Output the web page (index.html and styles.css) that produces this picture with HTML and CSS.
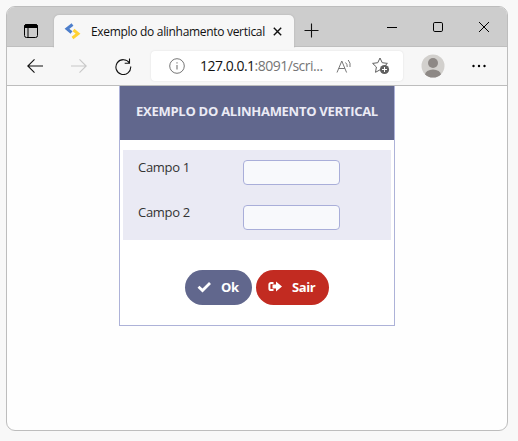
FILE: index.html
```html
<!DOCTYPE html>
<html lang="pt-BR">
<head>
<meta charset="utf-8">
<title>Exemplo do alinhamento vertical</title>
<link rel="stylesheet" href="styles.css">
</head>
<body>
<div class="window">
  <header class="tabbar">
    <svg class="tab-actions" width="16" height="16" viewBox="0 0 16 16"><rect x="1.5" y="1.5" width="13" height="13" rx="2" fill="none" stroke="#000"/><path d="M1.5 3.5a2 2 0 0 1 2-2h9a2 2 0 0 1 2 2V4.500h-13zM5 5v9" stroke="#000"/></svg>
    <div class="tab">
      <svg width="17" height="17" viewBox="0 0 17 17" fill="none" stroke-width="3"><path d="M8.500 1.500L3 5.800L7.500 9.500" stroke="#4d7ecb"/><path d="M9.500 7L14 10.700L8.500 15" stroke="#ffd234"/></svg>
      <span class="tab-title">Exemplo do alinhamento vertical</span>
      <svg class="tab-close" width="9" height="9" viewBox="0 0 9 9"><path d="M.8.8l7.4 7.4M8.2.8L.8 8.2" stroke="#111" stroke-width="1.4"/></svg>
    </div>
    <svg class="new-tab" width="15" height="15" viewBox="0 0 15 15"><path d="M7.5 .5v14M.5 7.5h14" stroke="#111" stroke-width="1.1"/></svg>
    <div class="controls">
      <svg width="10" height="10" viewBox="0 0 10 10"><path d="M0 5.5h10" stroke="#000"/></svg>
      <svg width="10" height="10" viewBox="0 0 10 10"><rect x=".5" y=".5" width="9" height="9" rx="1.3" fill="none" stroke="#000"/></svg>
      <svg width="10" height="10" viewBox="0 0 10 10"><path d="M0 0l10 10M10 0L0 10" stroke="#000"/></svg>
    </div>
  </header>
  <nav class="toolbar">
    <svg class="back" width="16" height="14" viewBox="0 0 16 14" fill="none" stroke="#111" stroke-width="1.1"><path d="M16 7H.8M7.5 .4L.8 7l6.700 6.600"/></svg>
    <svg class="forward" width="16" height="14" viewBox="0 0 16 14" fill="none" stroke="#c8c8c8" stroke-width="1.1"><path d="M0 7h15.200M8.500 .4L15.200 7l-6.700 6.600"/></svg>
    <svg class="reload" width="17" height="17" viewBox="0 0 17 17" fill="none" stroke="#111" stroke-width="1.1"><path d="M14.500 5A7.400 7.400 0 1 0 15.700 8.500M14.500 .5v4.800H9.700"/></svg>
    <div class="address">
      <svg width="16" height="16" viewBox="0 0 16 16"><circle cx="8" cy="8" r="7.300" fill="none" stroke="#767676"/><path d="M8 7v4.500M8 4.300v1.300" stroke="#767676" stroke-width="1.100"/></svg>
      <span class="url"><span class="host">127.0.0.1</span>:8091/scri...</span>
      <svg class="read" width="17" height="15" viewBox="0 0 17 15" fill="none" stroke="#767676"><path d="M1 13.500L5.800 2l4.800 11.500M2.700 9.500h6.200M9.500 3.500q2 1.800 1.700 4.500M12.200 1q2.700 3 1.800 7"/></svg>
      <svg class="star" width="18" height="18" viewBox="0 0 18 18"><path d="M8 1l2.200 4.700 5.200.7-3.700 3.600.5 2.500M8 1L5.800 5.700.6 6.400l3.800 3.600-.9 5.300L8 12.800" fill="none" stroke="#606060" stroke-linejoin="round"/><circle cx="12.500" cy="12.500" r="4.600" fill="#606060"/><path d="M12.500 10v5M10 12.500h5" stroke="#fff"/></svg>
    </div>
    <svg class="avatar" width="24" height="24" viewBox="0 0 24 24"><defs><clipPath id="face"><circle cx="12" cy="12" r="11.500"/></clipPath></defs><g clip-path="url(#face)"><path fill="#d2d0cd" d="M0 0h24v24H0z"/><circle cx="12" cy="9" r="5" fill="#8d8885"/><ellipse cx="12" cy="21" rx="8" ry="5.500" fill="#8d8885"/></g></svg>
    <svg class="more" width="14" height="4" viewBox="0 0 14 4"><circle cx="1.500" cy="2" r="1.200"/><circle cx="7" cy="2" r="1.200"/><circle cx="12.500" cy="2" r="1.200"/></svg>
  </nav>
  <main class="page">
    <form class="card">
      <h1><span>EXEMPLO DO ALINHAMENTO VERTICAL</span></h1>
      <div class="fields">
        <div class="row"><label for="campo1">Campo 1</label><input id="campo1" type="text"></div>
        <div class="row"><label for="campo2">Campo 2</label><input id="campo2" type="text"></div>
      </div>
      <div class="buttons">
        <button type="button" class="ok"><svg width="14" height="14" viewBox="0 0 14 14"><path d="M1.500 6.700l4 3.800L13 3" fill="none" stroke="#fff" stroke-width="2.800"/></svg><span>Ok</span></button>
        <button type="button" class="exit"><svg width="14" height="14" viewBox="0 0 14 14"><path d="M5.500 2.900H3A1.600 1.600 0 0 0 1.400 4.500v4A1.600 1.600 0 0 0 3 10.100h2.500" fill="none" stroke="#fff" stroke-width="2"/><path d="M4.500 4.500h3.500V1.500L14 6.500l-6 5V8.500H4.500z" fill="#fff"/></svg><span>Sair</span></button>
      </div>
    </form>
  </main>
</div>
</body>
</html>
```
FILE: styles.css
```css
* { box-sizing: border-box; }
body {
  margin: 0;
  padding: 6px;
  height: 441px;
  overflow: hidden;
  background: #f8f8f8;
  font-family: "Open Sans", "Noto Sans", sans-serif;
}
svg { display: block; flex: none; }
.window {
  width: 502px;
  height: 425px;
  border: 1px solid #bdbdbd;
  border-radius: 9px;
  overflow: hidden;
  background: #fefefe;
}
.tabbar {
  display: flex;
  height: 40px;
  background: #cdcdcd;
  border-bottom: 1px solid #bfbfbf;
}
.tab-actions { margin: 16px 0 0 16px; }
.tab {
  display: flex;
  align-items: center;
  width: 240px;
  height: 33px;
  margin: 8px 0 0 15px;
  padding-left: 10px;
  border-radius: 5px 5px 0 0;
  background: #f7f7f7;
  box-shadow: 0 0 2px #aaa;
  clip-path: inset(-3px -3px 0 -3px);
}
.tab-title {
  width: 174px;
  margin-left: 10px;
  font-size: 12px;
  line-height: 16px;
  letter-spacing: -0.31px;
  white-space: nowrap;
  color: #111;
}
.tab-close { margin-left: 8px; }
.new-tab { margin: 16px 0 0 10px; }
.controls {
  display: flex;
  gap: 36px;
  margin: 15px 0 0 68px;
}
.toolbar {
  display: flex;
  align-items: center;
  height: 39px;
  background: #f7f7f7;
  border-bottom: 1px solid #bdbdbd;
}
.back { margin-left: 20px; }
.forward { margin-left: 28px; }
.reload { margin-left: 28px; }
.address {
  display: flex;
  align-items: center;
  width: 252px;
  height: 30px;
  margin-left: 19px;
  padding-left: 18px;
  border-radius: 4px;
  background: #fff;
  box-shadow: 0 0 2px #ddd;
}
.url {
  width: 126px;
  margin-left: 15px;
  font-size: 14px;
  line-height: 20px;
  letter-spacing: -0.5px;
  white-space: nowrap;
  color: #767676;
}
.host { color: #111; }
.read { margin-left: 10px; }
.star { margin-left: 19px; }
.avatar { margin-left: 18px; }
.more { margin-left: 27px; }
.page { display: flex; padding-left: 112px; }
.card {
  width: 276px;
  height: 240px;
  border: 1px solid #adb2d8;
  border-top: 0;
  background: #fff;
}
h1 {
  height: 54px;
  margin: 0;
  background: #61678d;
  color: #ebebf5;
  font-size: 13px;
  line-height: 50px;
  letter-spacing: -0.27px;
  text-align: center;
  white-space: nowrap;
}
.fields {
  height: 90px;
  margin: 10px 3px 0;
  background: #eaeaf4;
}
.row {
  display: flex;
  height: 45px;
  padding: 10px 0 0 15px;
}
label {
  width: 105px;
  color: #333;
  font-size: 13px;
  line-height: 15px;
  letter-spacing: -0.3px;
}
input {
  width: 97px;
  height: 25px;
  border: 1px solid #a9aed9;
  border-radius: 4px;
  background: #f8f9fc;
}
.buttons {
  display: flex;
  gap: 4px;
  margin: 30px 0 0 65px;
}
button {
  display: flex;
  align-items: center;
  gap: 10px;
  height: 35px;
  padding: 0 0 1px 12px;
  border: 0;
  border-radius: 18px;
  color: #fff;
  font: bold 13px "Open Sans", "Noto Sans", sans-serif;
  letter-spacing: -0.4px;
}
.ok { width: 67px; background: #61678d; }
.exit { width: 73px; background: #c22b21; }
```
